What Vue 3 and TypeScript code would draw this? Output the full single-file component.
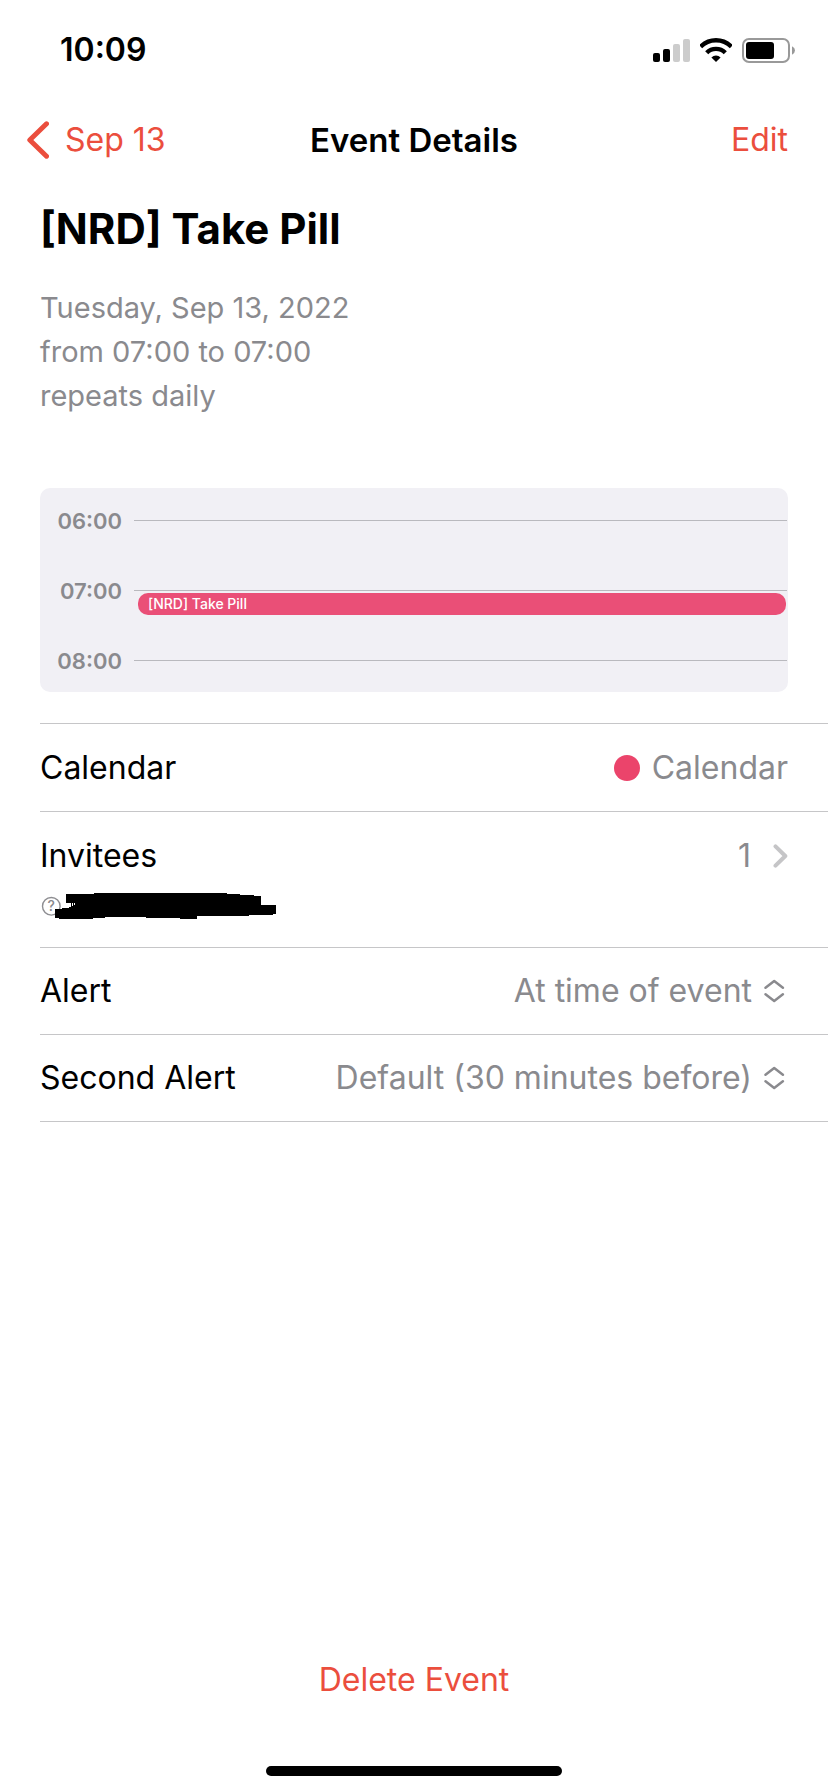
<script setup lang="ts">
import { ref } from 'vue'

interface Hour {
  label: string
  event?: string
}

interface AlertField {
  id: string
  label: string
  value: string
  options: string[]
}

const hours: Hour[] = [
  { label: '06:00' },
  { label: '07:00', event: '[NRD] Take Pill' },
  { label: '08:00' },
]

const alerts = ref<AlertField[]>([
  { id: 'alert', label: 'Alert', value: 'At time of event', options: ['None', 'At time of event'] },
  {
    id: 'second-alert',
    label: 'Second Alert',
    value: 'Default (30 minutes before)',
    options: ['None', 'Default (30 minutes before)'],
  },
])
</script>

<template>
  <div class="screen">
    <div class="status">
      <span class="clock">10:09</span>
      <div class="indicators">
        <svg width="37" height="23" viewBox="0 0 37 23" aria-hidden="true">
          <rect x="0" y="14" width="7" height="9" rx="2" />
          <rect x="10" y="10" width="7" height="13" rx="2" />
          <rect x="20" y="5" width="7" height="18" rx="2" fill="#cccccc" />
          <rect x="30" y="0" width="7" height="23" rx="2" fill="#cccccc" />
        </svg>
        <svg width="32" height="24" viewBox="0 0 32 24" aria-hidden="true">
          <path d="M.6 8.6A21.8 21.8 0 0 1 31.4 8.6" fill="none" stroke="#000" stroke-width="4.4" />
          <path d="M6.7 14.7A13.2 13.2 0 0 1 25.3 14.7" fill="none" stroke="#000" stroke-width="4.4" />
          <path d="M16 24L11.4 19.4A6.5 6.5 0 0 1 20.6 19.4Z" />
        </svg>
        <svg width="53" height="25" viewBox="0 0 53 25" aria-hidden="true">
          <rect x="1" y="1" width="46" height="23" rx="6" fill="none" stroke="#999" stroke-width="2" />
          <rect x="4" y="4" width="28" height="17" rx="3" />
          <path d="M50 8.3Q53 9.8 53 12.5T50 16.7Z" fill="#999" />
        </svg>
      </div>
    </div>

    <header class="nav">
      <button type="button" class="link back">
        <svg width="22" height="38" viewBox="0 0 22 38" aria-hidden="true">
          <path d="M19.5 2.8L2.8 19L19.5 35.2" fill="none" stroke="currentColor" stroke-width="5" stroke-linecap="round" stroke-linejoin="round" />
        </svg>
        Sep 13
      </button>
      <h1 class="nav-title">Event Details</h1>
      <button type="button" class="link edit">Edit</button>
    </header>

    <main class="content">
      <section class="summary">
        <h2 class="title">[NRD] Take Pill</h2>
        <p class="when">Tuesday, Sep 13, 2022<br />from 07:00 to 07:00<br />repeats daily</p>
        <div class="preview">
          <div v-for="hour in hours" :key="hour.label" class="hour">
            <span class="hour-label">{{ hour.label }}</span>
            <div class="track">
              <div v-if="hour.event" class="event">{{ hour.event }}</div>
            </div>
          </div>
        </div>
      </section>

      <section class="details">
        <div class="row calendar-row">
          <span>Calendar</span>
          <span class="value calendar"><i class="dot"></i>Calendar</span>
        </div>
        <div class="row invitees">
          <div class="line">
            <span id="invitees-label">Invitees</span>
            <button type="button" class="value count" aria-labelledby="invitees-label">
              1
              <svg width="15" height="24" viewBox="0 0 15 24" aria-hidden="true">
                <path d="M2.5 2.3L12.3 12L2.5 21.7" fill="none" stroke="#c5c5c7" stroke-width="4" stroke-linecap="round" stroke-linejoin="round" />
              </svg>
            </button>
          </div>
          <svg class="invitee" width="240" height="30" viewBox="0 0 240 30" aria-hidden="true">
            <circle cx="11.3" cy="16.3" r="8.8" fill="none" stroke="#8e8e92" stroke-width="1.4" />
            <text class="unknown" x="11.3" y="21.3" text-anchor="middle">?</text>
            <path d="M26 4H54V3H187V4H200V5H214V6H221V15H236V24H233V25H209V26H157V29H140V28H106V27H65V28H53V29H19V28H15V19H22V18H29V17H31V13H26Z" />
            <path d="M32.5 13V16M34.5 13V15" stroke="#fff" stroke-width="1" />
          </svg>
        </div>
        <div v-for="field in alerts" :key="field.id" class="row">
          <label :for="field.id">{{ field.label }}</label>
          <span class="value picker">
            <select :id="field.id" v-model="field.value">
              <option v-for="option in field.options" :key="option">{{ option }}</option>
            </select>
            <svg width="24" height="24" viewBox="0 0 24 24" aria-hidden="true">
              <path d="M1.5 8.7L10.2 2L18.9 8.7M1.5 15.3L10.2 22L18.9 15.3" fill="none" stroke="currentColor" stroke-width="2.5" stroke-linecap="round" stroke-linejoin="round" />
            </svg>
          </span>
        </div>
      </section>
    </main>

    <footer class="footer">
      <button type="button" class="link">Delete Event</button>
      <div class="home-bar"></div>
    </footer>
  </div>
</template>

<style>
body {
  margin: 0;
  background: #fff;
}
</style>

<style scoped>
.screen {
  box-sizing: border-box;
  display: flex;
  flex-direction: column;
  min-height: 100vh;
  background: #fff;
  color: #000;
  font-family: Inter, 'Liberation Sans', sans-serif;
  font-size: 32px;
  line-height: 40px;
}

button,
select {
  padding: 0;
  border: 0;
  background: none;
  color: inherit;
  font: inherit;
}

svg {
  flex: none;
  display: block;
}

.status {
  display: flex;
  justify-content: space-between;
  align-items: center;
  height: 100px;
  padding: 0 33px 0 60px;
}

.clock {
  font-weight: 600;
}

.indicators {
  display: flex;
  align-items: center;
  gap: 10px;
}

.nav {
  display: grid;
  grid-template-columns: 1fr auto 1fr;
  align-items: center;
  height: 80px;
  padding: 0 27px;
}

.nav-title {
  margin: 0;
  font-size: 33px;
  font-weight: 600;
}

.link {
  color: #eb4e3d;
}

.back {
  display: flex;
  align-items: center;
  justify-self: start;
  gap: 16px;
}

.edit {
  justify-self: end;
  margin-right: 13px;
}

.content {
  flex: 1;
}

.summary {
  padding: 21px 40px 31px;
}

.title {
  margin: 0;
  font-size: 42px;
  font-weight: 700;
  line-height: 56px;
}

.when {
  margin: 29px 0 0;
  color: #8a8a8e;
  font-size: 29px;
  line-height: 44px;
}

.preview {
  box-sizing: border-box;
  margin-top: 70px;
  padding-top: 32px;
  border-radius: 10px;
  background: #f1f0f5;
}

.hour {
  display: flex;
  align-items: flex-start;
  height: 70px;
}

.hour:last-child {
  height: 32px;
}

.hour-label {
  width: 82px;
  margin: -11px 12px 0 0;
  color: #8a8a8e;
  font-size: 22px;
  font-weight: 600;
  line-height: 24px;
  text-align: right;
}

.track {
  flex: 1;
  margin-right: 1px;
  border-top: 1px solid #b9b9be;
}

.event {
  margin: 2px 1px 0 4px;
  padding: 0 10px;
  border-radius: 10px;
  background: #ea4f77;
  color: #fff;
  font-size: 14px;
  font-weight: 500;
  line-height: 22px;
}

.details {
  margin-left: 40px;
  border-top: 1px solid #c6c6c8;
}

.row {
  display: flex;
  justify-content: space-between;
  align-items: center;
  min-height: 86px;
  padding-right: 40px;
  border-bottom: 1px solid #c6c6c8;
}

.calendar-row {
  min-height: 87px;
}

.value {
  display: flex;
  align-items: center;
  color: #8a8a8e;
}

.calendar {
  gap: 12px;
}

.dot {
  width: 26px;
  height: 26px;
  border-radius: 50%;
  background: #eb446b;
}

.invitees {
  flex-direction: column;
  align-items: stretch;
  justify-content: flex-start;
  padding-bottom: 27px;
}

.line {
  display: flex;
  justify-content: space-between;
  padding: 24px 0 14px;
}

.count {
  gap: 22px;
}

.unknown {
  fill: #8a8a8e;
  font-size: 14px;
  font-weight: 500;
}

.picker {
  gap: 12px;
}

select {
  appearance: none;
  field-sizing: content;
  text-align-last: right;
}

.footer {
  display: flex;
  flex-direction: column;
  align-items: center;
  gap: 66px;
  padding-bottom: 16px;
}

.home-bar {
  width: 296px;
  height: 10px;
  border-radius: 5px;
  background: #000;
}
</style>
